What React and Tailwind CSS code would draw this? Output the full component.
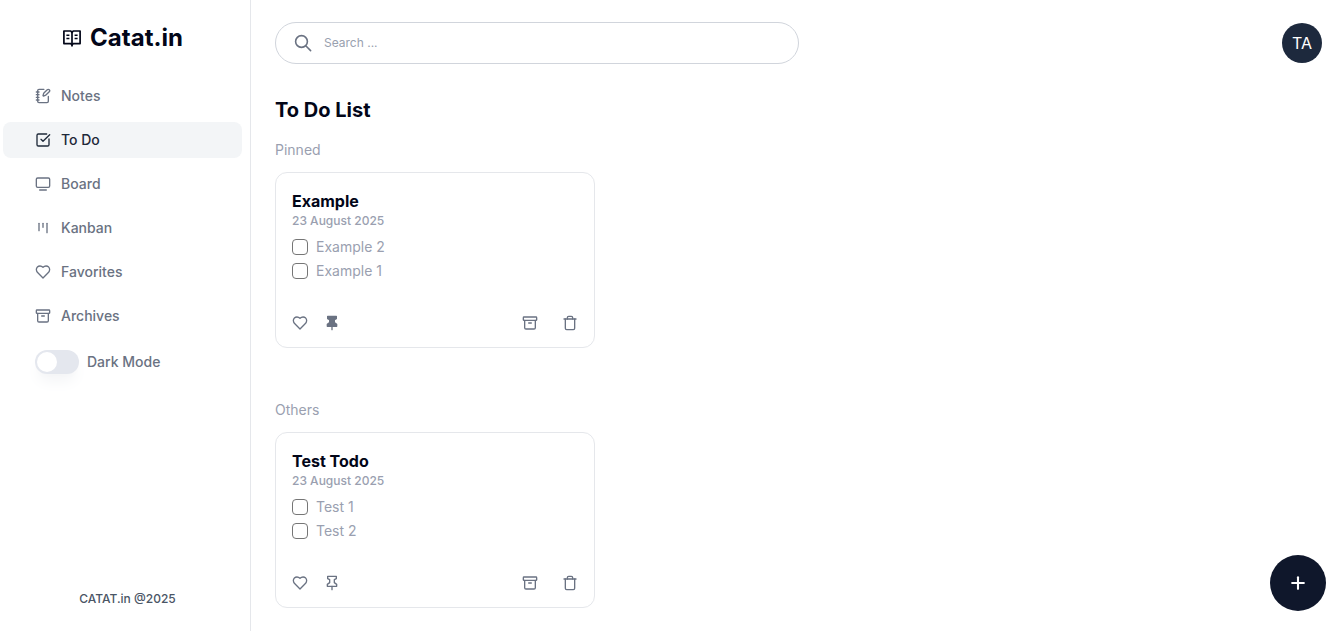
import { useState } from "react";
import {
  LuNotebookPen,
  LuSquareCheckBig,
  LuTvMinimal,
  LuHeart,
  LuArchive,
  LuTrash,
  LuPlus,
} from "react-icons/lu";

function BookIcon({ className }) {
  return (
    <svg
      viewBox="0 0 20 20"
      className={className}
      fill="none"
      stroke="currentColor"
      strokeWidth="1.7"
      strokeLinejoin="round"
      aria-hidden="true"
    >
      <path d="M10 4.4 8.8 3H1.9v12.6h6.9L10 16.8l1.2-1.2h6.9V3h-6.9L10 4.4Z" />
      <path d="M10 4v14.4" />
      <path d="M4.4 7.2h3M4.4 10.6h3M12.6 7.2h3M12.6 10.6h3" strokeWidth="1.5" />
    </svg>
  );
}

function SearchIcon({ className }) {
  return (
    <svg
      viewBox="0 0 20 20"
      className={className}
      fill="none"
      stroke="currentColor"
      strokeWidth="1.6"
      strokeLinecap="round"
      aria-hidden="true"
    >
      <circle cx="8.5" cy="8.5" r="5.9" />
      <path d="m13 13 4.6 4.6" />
    </svg>
  );
}

function PinIcon({ filled }) {
  return (
    <svg
      viewBox="0 0 24 24"
      className="size-4"
      fill={filled ? "currentColor" : "none"}
      stroke="currentColor"
      strokeWidth="2"
      strokeLinecap="round"
      strokeLinejoin="round"
      aria-hidden="true"
    >
      <path d="M5.5 2h13v3.5L15.5 7v4.5L19 14v3H5v-3l3.5-2.5V7l-3-1.5Z" />
      <path d="M12 17v5" />
    </svg>
  );
}

function KanbanIcon({ className }) {
  return (
    <svg
      viewBox="0 0 24 24"
      className={className}
      fill="none"
      stroke="currentColor"
      strokeWidth="2"
      strokeLinecap="round"
      strokeLinejoin="round"
      aria-hidden="true"
    >
      <path d="M6 5v11" />
      <path d="M12 5v6" />
      <path d="M18 5v14" />
    </svg>
  );
}

const NAV = [
  { label: "Notes", Icon: LuNotebookPen },
  { label: "To Do", Icon: LuSquareCheckBig, active: true },
  { label: "Board", Icon: LuTvMinimal },
  { label: "Kanban", Icon: KanbanIcon },
  { label: "Favorites", Icon: LuHeart },
  { label: "Archives", Icon: LuArchive },
];

function Sidebar() {
  const [dark, setDark] = useState(false);
  return (
    <aside className="flex w-[251px] shrink-0 flex-col border-r border-gray-200 pr-2 pl-[3px]">
      <a href="#home" className="mt-5 flex items-center justify-center gap-2 text-slate-950">
        <BookIcon className="size-5" />
        <span className="text-2xl leading-9 font-bold">Catat.in</span>
      </a>
      <nav className="mt-[22px] flex flex-col gap-2">
        {NAV.map(({ label, Icon, active }) => (
          <a
            key={label}
            href={"#" + label.toLowerCase().replace(" ", "-")}
            aria-current={active ? "page" : undefined}
            className={
              active
                ? "flex h-9 items-center gap-2.5 rounded-lg bg-[#f3f5f7] px-8 text-sm font-medium text-gray-800"
                : "flex h-9 items-center gap-2.5 rounded-lg px-8 text-sm font-medium text-gray-500"
            }
          >
            <Icon className="size-4" />
            {label}
          </a>
        ))}
      </nav>
      <label className="mt-4 flex items-center gap-2 px-8 text-sm font-medium text-gray-500">
        <input
          type="checkbox"
          role="switch"
          checked={dark}
          onChange={(e) => setDark(e.target.checked)}
          className="peer sr-only"
        />
        <span className="flex h-6 w-11 items-center rounded-full bg-[#e4e7ee] p-0.5 shadow-lg shadow-gray-100 peer-checked:justify-end peer-checked:bg-slate-800">
          <span className="size-5 rounded-full bg-white" />
        </span>
        Dark Mode
      </label>
      <p className="mt-auto mb-6 pl-2.5 text-center text-xs leading-4 font-medium text-gray-600">CATAT.in @2025</p>
    </aside>
  );
}

function TodoCard({ title, date, items, pinned }) {
  return (
    <article className="flex h-44 w-80 flex-col rounded-xl border border-gray-200 p-4">
      <h3 className="leading-6 font-bold text-slate-950">{title}</h3>
      <p className="text-xs leading-4 font-medium text-[#9a9fb0]">{date}</p>
      <ul className="mt-1.5 flex flex-col">
        {items.map((item) => (
          <li key={item}>
            <label className="flex h-6 items-center gap-2 text-sm text-[#9a9fb0]">
              <input
                type="checkbox"
                className="size-4 appearance-none rounded border border-[#767676] bg-white checked:bg-slate-800"
              />
              {item}
            </label>
          </li>
        ))}
      </ul>
      <div className="mt-auto flex items-center justify-between text-gray-500">
        <div className="flex gap-4">
          <button type="button" aria-label="Favorite">
            <LuHeart className="size-4" />
          </button>
          <button type="button" aria-label={pinned ? "Unpin" : "Pin"}>
            <PinIcon filled={pinned} />
          </button>
        </div>
        <div className="flex gap-6">
          <button type="button" aria-label="Archive">
            <LuArchive className="size-4" />
          </button>
          <button type="button" aria-label="Delete">
            <LuTrash className="size-4" />
          </button>
        </div>
      </div>
    </article>
  );
}

function Section({ name, children }) {
  return (
    <section>
      <h2 className="text-sm leading-5 text-[#9a9fb0]">{name}</h2>
      <div className="mt-3 flex flex-wrap gap-4">{children}</div>
    </section>
  );
}

export default function App() {
  return (
    <div className="flex min-h-screen bg-white font-['Inter',sans-serif]">
      <Sidebar />
      <main className="min-w-0 flex-1 pt-[22px] pr-5 pb-5 pl-6">
        <header className="flex items-center justify-between">
          <label className="flex h-[42px] w-1/2 items-center gap-[11px] rounded-full border border-gray-300 px-[17px] text-gray-500">
            <SearchIcon className="size-5 shrink-0" />
            <input
              type="search"
              aria-label="Search"
              placeholder="Search ..."
              className="min-w-0 flex-1 bg-transparent text-xs text-slate-800 outline-none placeholder:text-gray-400"
            />
          </label>
          <button type="button" className="size-10 rounded-full bg-slate-800 text-white">
            TA
          </button>
        </header>
        <h1 className="mt-8 text-xl leading-7 font-bold text-slate-950">To Do List</h1>
        <div className="mt-4 flex flex-col gap-[52px]">
          <Section name="Pinned">
            <TodoCard title="Example" date="23 August 2025" items={["Example 2", "Example 1"]} pinned />
          </Section>
          <Section name="Others">
            <TodoCard title="Test Todo" date="23 August 2025" items={["Test 1", "Test 2"]} />
          </Section>
        </div>
      </main>
      <button
        type="button"
        aria-label="Add to do"
        className="fixed right-4 bottom-5 flex size-14 items-center justify-center rounded-full bg-slate-900 text-white"
      >
        <LuPlus className="size-5" strokeWidth={2.5} />
      </button>
    </div>
  );
}
